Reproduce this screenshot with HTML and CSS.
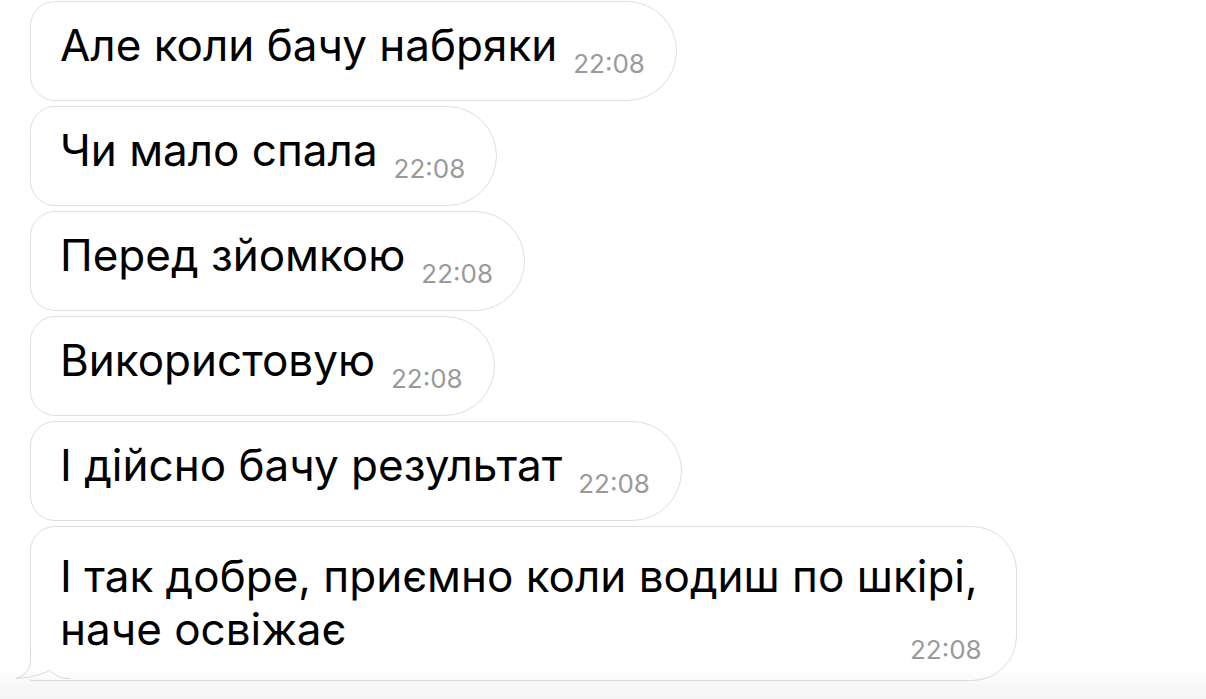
FILE: index.html
```html
<!DOCTYPE html>
<html lang="uk">
<head>
<meta charset="utf-8">
<title>Chat</title>
<link rel="stylesheet" href="styles.css">
</head>
<body>
<div class="screen">
  <div class="chat">
    <div class="bubble"><span class="msg-text">Але коли бачу набряки</span><span class="msg-time">22:08</span></div>
    <div class="bubble"><span class="msg-text">Чи мало спала</span><span class="msg-time">22:08</span></div>
    <div class="bubble"><span class="msg-text">Перед зйомкою</span><span class="msg-time">22:08</span></div>
    <div class="bubble"><span class="msg-text">Використовую</span><span class="msg-time">22:08</span></div>
    <div class="bubble"><span class="msg-text">І дійсно бачу результат</span><span class="msg-time">22:08</span></div>
    <div class="bubble bubble--tail">
      <span class="msg-text">І так добре, приємно коли водиш по шкірі,<br>наче освіжає</span>
      <span class="msg-time">22:08</span>
      <svg class="tail" width="56" height="32" viewBox="0 0 56 32" aria-hidden="true">
        <rect x="0" y="0" width="56" height="30" fill="#fff"/>
        <path d="M16.5 0 L16.5 10 C16.5 20 12 26 2 29.5 C14 29 28 26 35.5 21 C40 25.5 46 29.5 54 29.5 L56 29.5" fill="none" stroke="#dcdcdc" stroke-width="1"/>
      </svg>
    </div>
  </div>
</div>
</body>
</html>
```

FILE: styles.css
```css
html, body {
  margin: 0;
  padding: 0;
  background: #ffffff;
}

.screen {
  position: relative;
  height: 699px;
  overflow: hidden;
  font-family: "Inter", "Noto Sans", sans-serif;
}

.screen::after {
  content: "";
  position: absolute;
  left: 0;
  right: 0;
  bottom: 0;
  height: 30px;
  background: linear-gradient(to bottom, rgba(0, 0, 0, 0) 0%, rgba(0, 0, 0, 0.03) 55%, rgba(0, 0, 0, 0.04) 100%);
  pointer-events: none;
}

.chat {
  display: flex;
  flex-direction: column;
  align-items: flex-start;
  gap: 5px;
  padding: 1px 0 0 30px;
}

.bubble {
  display: flex;
  align-items: flex-end;
  background: #ffffff;
  border: 1px solid #dedede;
  border-radius: 25px 50px 50px 25px;
  padding: 16px 31px 23px 29px;
}

.msg-text {
  font-size: 44px;
  line-height: 54px;
  margin-bottom: 5px;
  color: #000000;
  white-space: nowrap;
}

.msg-time {
  font-size: 26px;
  line-height: 26px;
  color: #9a9a9a;
  margin-left: 16px;
  white-space: nowrap;
}

.bubble--tail {
  position: relative;
  flex-direction: column;
  align-items: stretch;
  padding: 23px 34px 17px 29px;
  border-radius: 25px 45px 45px 0;
}

.bubble--tail .msg-text {
  line-height: 53px;
  margin: 0 4px 0 0;
}

.bubble--tail .msg-time {
  align-self: flex-end;
  margin-top: -19px;
}

.tail {
  position: absolute;
  left: -17px;
  bottom: -1px;
  display: block;
}
```
